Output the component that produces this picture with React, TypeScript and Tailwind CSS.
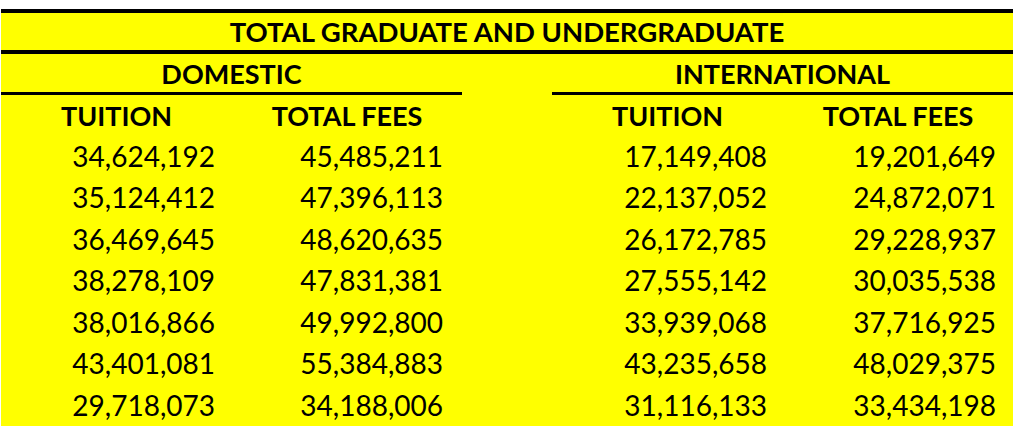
import { FC } from 'react'

const rows = [
  ['34,624,192', '45,485,211', '17,149,408', '19,201,649'],
  ['35,124,412', '47,396,113', '22,137,052', '24,872,071'],
  ['36,469,645', '48,620,635', '26,172,785', '29,228,937'],
  ['38,278,109', '47,831,381', '27,555,142', '30,035,538'],
  ['38,016,866', '49,992,800', '33,939,068', '37,716,925'],
  ['43,401,081', '55,384,883', '43,235,658', '48,029,375'],
  ['29,718,073', '34,188,006', '31,116,133', '33,434,198'],
]

const cols = 'grid grid-cols-[231px_230px_90px_231px_230px]'

const App: FC = () => {
  return (
    <div className="pt-[9px] pl-[1px] w-[1013px] text-black font-['Lato',_'Liberation_Sans',_sans-serif]">
      <div className="bg-[#ffff00] border-t-[4px] border-black">
        {/* title */}
        <div className="h-[41px] border-b-[4px] border-black flex items-center justify-center text-[27.5px] font-bold leading-none">
          TOTAL GRADUATE AND UNDERGRADUATE
        </div>

        {/* domestic / international */}
        <div className={`${cols} h-[41px]`}>
          <div className="col-span-2 border-b-[3px] border-black flex items-center justify-center text-[27px] font-bold leading-none">
            DOMESTIC
          </div>
          <div></div>
          <div className="col-span-2 border-b-[3px] border-black flex items-center justify-center text-[27px] font-bold leading-none">
            INTERNATIONAL
          </div>
        </div>

        {/* column headers */}
        <div className={`${cols} h-[40px] text-[27px] font-bold leading-none`}>
          <div className="flex items-center justify-center">TUITION</div>
          <div className="flex items-center justify-center">TOTAL FEES</div>
          <div></div>
          <div className="flex items-center justify-center">TUITION</div>
          <div className="flex items-center justify-center">TOTAL FEES</div>
        </div>

        {/* data */}
        {rows.map((r, i) => (
          <div key={i} className={`${cols} h-[41.5px] text-[28px] leading-none`}>
            <div className="flex items-center justify-end pr-[17px]">{r[0]}</div>
            <div className="flex items-center justify-end pr-[19px]">{r[1]}</div>
            <div></div>
            <div className="flex items-center justify-end pr-[16px]">{r[2]}</div>
            <div className="flex items-center justify-end pr-[17px]">{r[3]}</div>
          </div>
        ))}
      </div>
    </div>
  )
}

export default App
